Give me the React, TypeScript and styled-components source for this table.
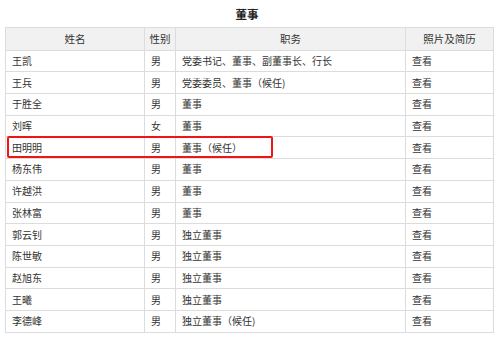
import styled, { createGlobalStyle } from "styled-components";

const GlobalStyle = createGlobalStyle`
  html, body {
    margin: 0;
    padding: 0;
    background: #ffffff;
  }
  body {
    font-family: "Noto Sans CJK SC", "Noto Sans", "Liberation Sans", sans-serif;
    color: #333333;
  }
`;

const Page = styled.div`
  width: 500px;
  padding: 8px 0 0 5px;
  box-sizing: border-box;
`;

const Title = styled.div`
  width: 484px;
  text-align: center;
  font-size: 11.5px;
  line-height: 13px;
  font-weight: 700;
  color: #222;
  margin-bottom: 6px;
`;

const TableWrap = styled.div`
  position: relative;
  width: 484px;
`;

const Table = styled.table`
  width: 484px;
  border-collapse: collapse;
  table-layout: fixed;
  font-size: 10px;
`;

const HeadCell = styled.th<{ $w: number }>`
  width: ${(p) => p.$w}px;
  height: 21.7px;
  padding: 0;
  background: #f1f1f1;
  border: 1px solid #dcdcdc;
  font-weight: 400;
  font-size: 10.5px;
  color: #333;
  text-align: center;
  vertical-align: middle;
`;

const Row = styled.tr`
  height: 21.7px;
`;

const Cell = styled.td`
  padding: 0 6px;
  border: 1px solid #dcdcdc;
  color: #333;
  white-space: nowrap;
  vertical-align: middle;
  line-height: 12px;
`;

const Highlight = styled.div`
  position: absolute;
  left: 2px;
  top: 108.5px;
  width: 266px;
  height: 22px;
  border: 2px solid #f01414;
  border-radius: 2px;
  box-sizing: border-box;
  pointer-events: none;
`;

const columns = [
  { label: "姓名", width: 138 },
  { label: "性别", width: 30 },
  { label: "职务", width: 229 },
  { label: "照片及简历", width: 87 },
];

const directors = [
  ["王凯", "男", "党委书记、董事、副董事长、行长"],
  ["王兵", "男", "党委委员、董事（候任)"],
  ["于胜全", "男", "董事"],
  ["刘晖", "女", "董事"],
  ["田明明", "男", "董事（候任）"],
  ["杨东伟", "男", "董事"],
  ["许越洪", "男", "董事"],
  ["张林富", "男", "董事"],
  ["郭云钊", "男", "独立董事"],
  ["陈世敏", "男", "独立董事"],
  ["赵旭东", "男", "独立董事"],
  ["王曦", "男", "独立董事"],
  ["李德峰", "男", "独立董事（候任)"],
];

export default function App() {
  return (
    <>
      <GlobalStyle />
      <Page>
        <Title>董事</Title>
        <TableWrap>
          <Table>
            <thead>
              <tr>
                {columns.map((c) => (
                  <HeadCell key={c.label} $w={c.width}>
                    {c.label}
                  </HeadCell>
                ))}
              </tr>
            </thead>
            <tbody>
              {directors.map(([name, sex, duty]) => (
                <Row key={name}>
                  <Cell>{name}</Cell>
                  <Cell>{sex}</Cell>
                  <Cell>{duty}</Cell>
                  <Cell>查看</Cell>
                </Row>
              ))}
            </tbody>
          </Table>
          <Highlight />
        </TableWrap>
      </Page>
    </>
  );
}
